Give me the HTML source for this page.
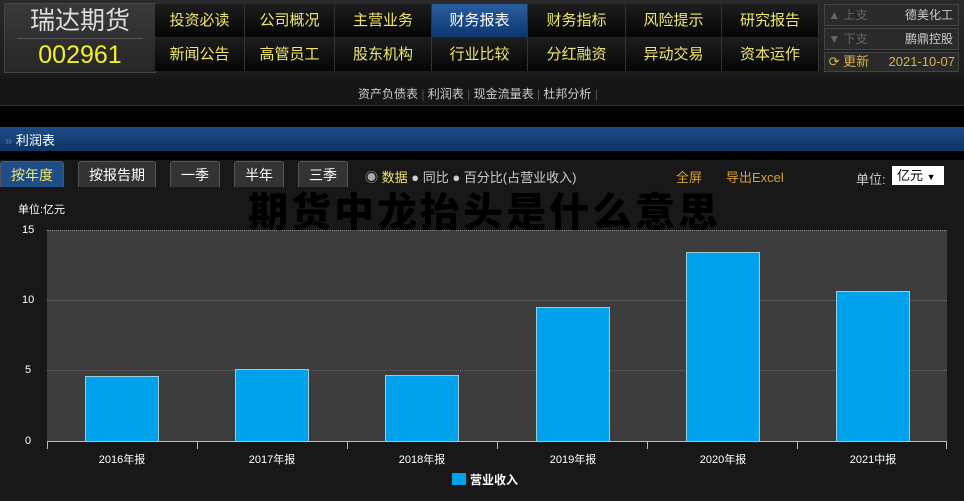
<!DOCTYPE html>
<html><head><meta charset="utf-8"><style>
*{margin:0;padding:0;box-sizing:border-box}
body{width:964px;height:501px;background:#000;font-family:"Liberation Sans","Noto Sans CJK SC",sans-serif;position:relative;overflow:hidden;color:#ddd}
.a{position:absolute}
.hdr{left:0;top:0;width:964px;height:78px;background:linear-gradient(#2a2a2a,#1a1a1a)}
.logo{left:4px;top:3px;width:152px;height:70px;background:linear-gradient(#3a3a3a,#262626);border:1px solid #444}
.nav{background:linear-gradient(#1e1e1e,#050505);color:#f0e76a;font-size:15px;text-align:center;line-height:33px;border-right:1px solid #333}
.sel{background:linear-gradient(#2a5ea0,#0d3670);color:#fff}
.rp{background:#2a2a2a;border:1px solid #444;font-size:12px;line-height:20px}
.tab{top:161px;height:26px;line-height:26px;font-size:14px;text-align:center;background:#333;color:#fff;border:1px solid #555;border-bottom:none;border-radius:3px 3px 0 0}
.bar{background:#00a2ec;border:1px solid #9cd;border-bottom:none}
.yl{font-size:11px;color:#fff;left:22px}
.xl{font-size:11px;color:#fff;top:451px;width:80px;text-align:center}
</style></head><body>
<div class="a hdr"></div>
<div class="a logo"><div style="text-align:center;color:#ddd;font-size:25px;line-height:34px">瑞达期货</div><div style="margin:0 12px;border-top:1px solid #555"></div><div style="text-align:center;color:#f2f02a;font-size:25px;line-height:32px">002961</div></div>
<div class="a nav" style="left:155px;top:4px;width:90px">投资必读</div>
<div class="a nav" style="left:245px;top:4px;width:90px">公司概况</div>
<div class="a nav" style="left:335px;top:4px;width:97px">主营业务</div>
<div class="a nav sel" style="left:432px;top:4px;width:96px">财务报表</div>
<div class="a nav" style="left:528px;top:4px;width:98px">财务指标</div>
<div class="a nav" style="left:626px;top:4px;width:96px">风险提示</div>
<div class="a nav" style="left:722px;top:4px;width:97px">研究报告</div>
<div class="a nav" style="left:155px;top:38px;width:90px">新闻公告</div>
<div class="a nav" style="left:245px;top:38px;width:90px">高管员工</div>
<div class="a nav" style="left:335px;top:38px;width:97px">股东机构</div>
<div class="a nav" style="left:432px;top:38px;width:96px">行业比较</div>
<div class="a nav" style="left:528px;top:38px;width:98px">分红融资</div>
<div class="a nav" style="left:626px;top:38px;width:96px">异动交易</div>
<div class="a nav" style="left:722px;top:38px;width:97px">资本运作</div>
<div class="a rp" style="left:824px;top:4px;width:135px;height:22px;color:#666">&nbsp;▲ 上支<span style="float:right;color:#ccc;margin-right:5px">德美化工</span></div>
<div class="a rp" style="left:824px;top:28px;width:135px;height:22px;color:#666">&nbsp;▼ 下支<span style="float:right;color:#ccc;margin-right:5px">鹏鼎控股</span></div>
<div class="a rp" style="left:824px;top:52px;width:135px;height:20px;line-height:18px;color:#d9b24a;font-size:13px">&nbsp;⟳ 更新<span style="float:right;margin-right:3px">2021-10-07</span></div>
<div class="a" style="left:0;top:78px;width:964px;height:28px;background:#161616;border-bottom:1px solid #333"></div>
<div class="a" style="left:358px;top:85px;font-size:12px;color:#ccc">资产负债表 <span style="color:#555">|</span> 利润表 <span style="color:#555">|</span> 现金流量表 <span style="color:#555">|</span> 杜邦分析 <span style="color:#555">|</span></div>
<div class="a" style="left:0;top:127px;width:964px;height:24px;background:linear-gradient(#1f4d88,#0f3565)"></div>
<div class="a" style="left:5px;top:130px;font-size:13px;color:#fff"><span style="color:#4a78aa">»</span> 利润表</div>
<div class="a" style="left:0;top:160px;width:964px;height:341px;background:#181818"></div>
<div class="a tab" style="left:0;width:64px;background:#1f4d88;color:#f0e76a">按年度</div>
<div class="a tab" style="left:78px;width:78px">按报告期</div>
<div class="a tab" style="left:170px;width:50px">一季</div>
<div class="a tab" style="left:234px;width:50px">半年</div>
<div class="a tab" style="left:298px;width:50px">三季</div>
<div class="a" style="left:365px;top:167px;font-size:13px;color:#ccc"><span style="color:#aaa">◉</span> <span style="color:#f0e76a">数据</span> ● 同比 ● 百分比(占营业收入)</div>
<div class="a" style="left:676px;top:167px;font-size:13px;color:#d9a030">全屏</div>
<div class="a" style="left:726px;top:167px;font-size:13px;color:#d9a030">导出Excel</div>
<div class="a" style="left:856px;top:169px;font-size:13px;color:#ccc">单位:</div>
<div class="a" style="left:892px;top:166px;width:52px;height:19px;background:#fff;color:#000;font-size:13px;line-height:19px;padding-left:5px">亿元 <span style="font-size:9px">▼</span></div>
<div class="a" style="left:18px;top:201px;font-size:11px;color:#fff">单位:亿元</div>
<div class="a" style="left:47px;top:230px;width:900px;height:211px;background:#3d3d3d"></div>
<div class="a" style="left:47px;top:230px;width:900px;border-top:1px dotted #888"></div>
<div class="a" style="left:47px;top:300px;width:900px;border-top:1px dotted #666"></div>
<div class="a" style="left:47px;top:370px;width:900px;border-top:1px dotted #666"></div>
<div class="a yl" style="top:224px">15</div>
<div class="a yl" style="top:294px">10</div>
<div class="a yl" style="top:364px;left:25px">5</div>
<div class="a yl" style="top:435px;left:25px">0</div>
<div class="a bar" style="left:85px;top:376px;width:74px;height:65px"></div>
<div class="a bar" style="left:235px;top:369px;width:74px;height:72px"></div>
<div class="a bar" style="left:385px;top:375px;width:74px;height:66px"></div>
<div class="a bar" style="left:536px;top:307px;width:74px;height:134px"></div>
<div class="a bar" style="left:686px;top:252px;width:74px;height:189px"></div>
<div class="a bar" style="left:836px;top:291px;width:74px;height:150px"></div>
<div class="a" style="left:47px;top:441px;width:900px;border-top:1px solid #bbb"></div>
<div class="a" style="left:47px;top:441px;width:900px;height:8px;background:repeating-linear-gradient(90deg,#bbb 0 1px,transparent 1px 150px)"></div>
<div class="a" style="left:946px;top:441px;width:1px;height:8px;background:#bbb"></div>
<div class="a xl" style="left:82px">2016年报</div>
<div class="a xl" style="left:232px">2017年报</div>
<div class="a xl" style="left:382px">2018年报</div>
<div class="a xl" style="left:533px">2019年报</div>
<div class="a xl" style="left:683px">2020年报</div>
<div class="a xl" style="left:833px">2021中报</div>
<div class="a" style="left:452px;top:473px;width:14px;height:12px;background:#00a2ec"></div>
<div class="a" style="left:470px;top:471px;font-size:12px;color:#fff;font-weight:bold">营业收入</div>
<div class="a" style="left:248px;top:190px;font-size:40px;font-weight:900;color:#000;letter-spacing:3px;line-height:46px;white-space:nowrap">期货中龙抬头是什么意思</div>
</body></html>
